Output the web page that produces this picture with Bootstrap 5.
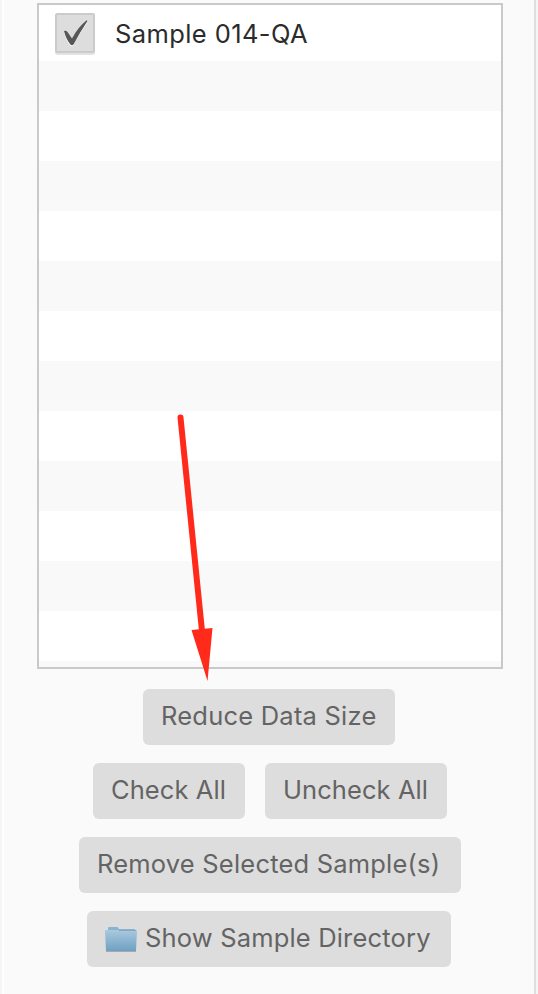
<!DOCTYPE html>
<html lang="en">
<head>
<meta charset="utf-8">
<meta name="viewport" content="width=device-width, initial-scale=1">
<title>Samples</title>
<link href="https://cdn.jsdelivr.net/npm/bootstrap@5.3.0/dist/css/bootstrap.min.css" rel="stylesheet">
<style>
  body { font-family: Inter, "Liberation Sans", sans-serif; background: #fafafa; overflow: hidden; }
  .page { background: #f5f5f5; height: 994px; }
  .panel { height: 994px; margin: 0 2px; padding: 3px 31px 0 33px; background: #fafafa; border-left: 2px solid #fff; border-right: 2px solid #dfdfdf; }
  .samples { height: 666px; border: 2px solid #c9c9c9; background: #fff; overflow: hidden; }
  .samples .list-group-item { height: 50px; flex: none; border: 0; padding: 0; background: #fff; }
  .samples .list-group-item:nth-child(even) { background: #f9f9f9; }
  .samples .list-group-item:first-child { height: 56px; padding: 0 0 0 15px; color: #2b2b2b; }
  .tick { width: 42px; height: 44px; flex: none; margin-top: 1px; }
  .sample-name { font-size: 25.5px; line-height: 32px; margin: 2px 0 0 19px; letter-spacing: .4px; }
  .actions { gap: 18px; padding-top: 20px; }
  .actions .btn { height: 56px; padding: 0 0 2px 18px; border: 0; border-radius: 6px; background: #ddd; color: #646464; font-size: 25.5px; line-height: 32px; text-align: left; letter-spacing: .17px; }
  .actions .w-reduce { width: 252px; margin-right: 2px; letter-spacing: .22px; }
  .actions .w-check, .actions .w-uncheck { letter-spacing: .08px; }
  .w-check { width: 152px; }
  .w-uncheck { width: 182px; }
  .actions .w-remove { width: 382px; letter-spacing: .2px; }
  .actions .w-show { width: 364px; margin-right: 2px; }
  .pair { gap: 20px; }
  .folder { margin-top: 2px; }
  .arrow { left: 170px; top: 400px; pointer-events: none; }
</style>
<script src="https://cdn.jsdelivr.net/npm/bootstrap@5.3.0/dist/js/bootstrap.bundle.min.js"></script>
</head>
<body>
<div class="page overflow-hidden position-relative">
  <main class="panel">
    <ul class="list-group rounded-0 samples">
      <li class="list-group-item d-flex align-items-center">
        <svg class="tick" viewBox="0 0 42 44" role="img" aria-label="Checked">
          <rect x="1" y="3" width="40" height="40" rx="3" fill="#e3e3e3"/>
          <rect x="2" y="2" width="38" height="38" rx="1" fill="#ddd" stroke="#cbcbcb" stroke-width="2"/>
          <path d="M10 19Q12 18 13 20L18 27Q24 15 33 8L33.200 9.500Q25 21 19.500 32Q18 34.500 16 32Q12 27 10 19Z" fill="#fff" transform="translate(0 1.300)"/>
          <path d="M10 19Q12 18 13.500 20L18 26.500Q24 15 33 8L33.200 9.500Q25.500 21 19.800 32Q18 34.500 16 32Q12 27 10 19Z" fill="#575757"/>
        </svg>
        <span class="sample-name text-nowrap">Sample 014-QA</span>
      </li>
      <li class="list-group-item"></li><li class="list-group-item"></li>
      <li class="list-group-item"></li><li class="list-group-item"></li>
      <li class="list-group-item"></li><li class="list-group-item"></li>
      <li class="list-group-item"></li><li class="list-group-item"></li>
      <li class="list-group-item"></li><li class="list-group-item"></li>
      <li class="list-group-item"></li><li class="list-group-item"></li>
      <li class="list-group-item"></li>
    </ul>
    <div class="actions d-flex flex-column align-items-center">
      <button type="button" class="btn text-nowrap w-reduce">Reduce Data Size</button>
      <div class="pair d-flex justify-content-center">
        <button type="button" class="btn text-nowrap w-check">Check All</button>
        <button type="button" class="btn text-nowrap w-uncheck">Uncheck All</button>
      </div>
      <button type="button" class="btn text-nowrap w-remove">Remove Selected Sample(s)</button>
      <button type="button" class="btn text-nowrap w-show d-flex align-items-center gap-2">
        <svg class="folder flex-shrink-0" width="32" height="26" viewBox="0 0 32 26" aria-hidden="true">
          <defs><linearGradient id="folder" x1="0" y1="0" x2="0" y2="1"><stop offset="0" stop-color="#a9c9de"/><stop offset="1" stop-color="#6fa0c2"/></linearGradient></defs>
          <path d="M3 5V2Q3 1 4 1H12Q13 1 14 3H30V6H3Z" fill="#8db3cb"/>
          <path d="M0 5Q0 4 1 4H31Q32 4 32 5L31 25H1Z" fill="url(#folder)"/>
          <path d="M14 4.500H31" stroke="#7fa9c4"/><path d="M1 25.500H31" stroke="#a5a9b0"/>
        </svg>
        <span>Show Sample Directory</span>
      </button>
    </div>
  </main>
  <svg class="arrow position-absolute" width="60" height="290" viewBox="0 0 60 290" aria-hidden="true">
    <path d="M10.500 17.500L32 231" stroke="#ff2a1a" stroke-width="6" stroke-linecap="round"/>
    <path d="M21.500 230L42.500 228L37.500 281Z" fill="#ff2a1a"/>
  </svg>
</div>
</body>
</html>
